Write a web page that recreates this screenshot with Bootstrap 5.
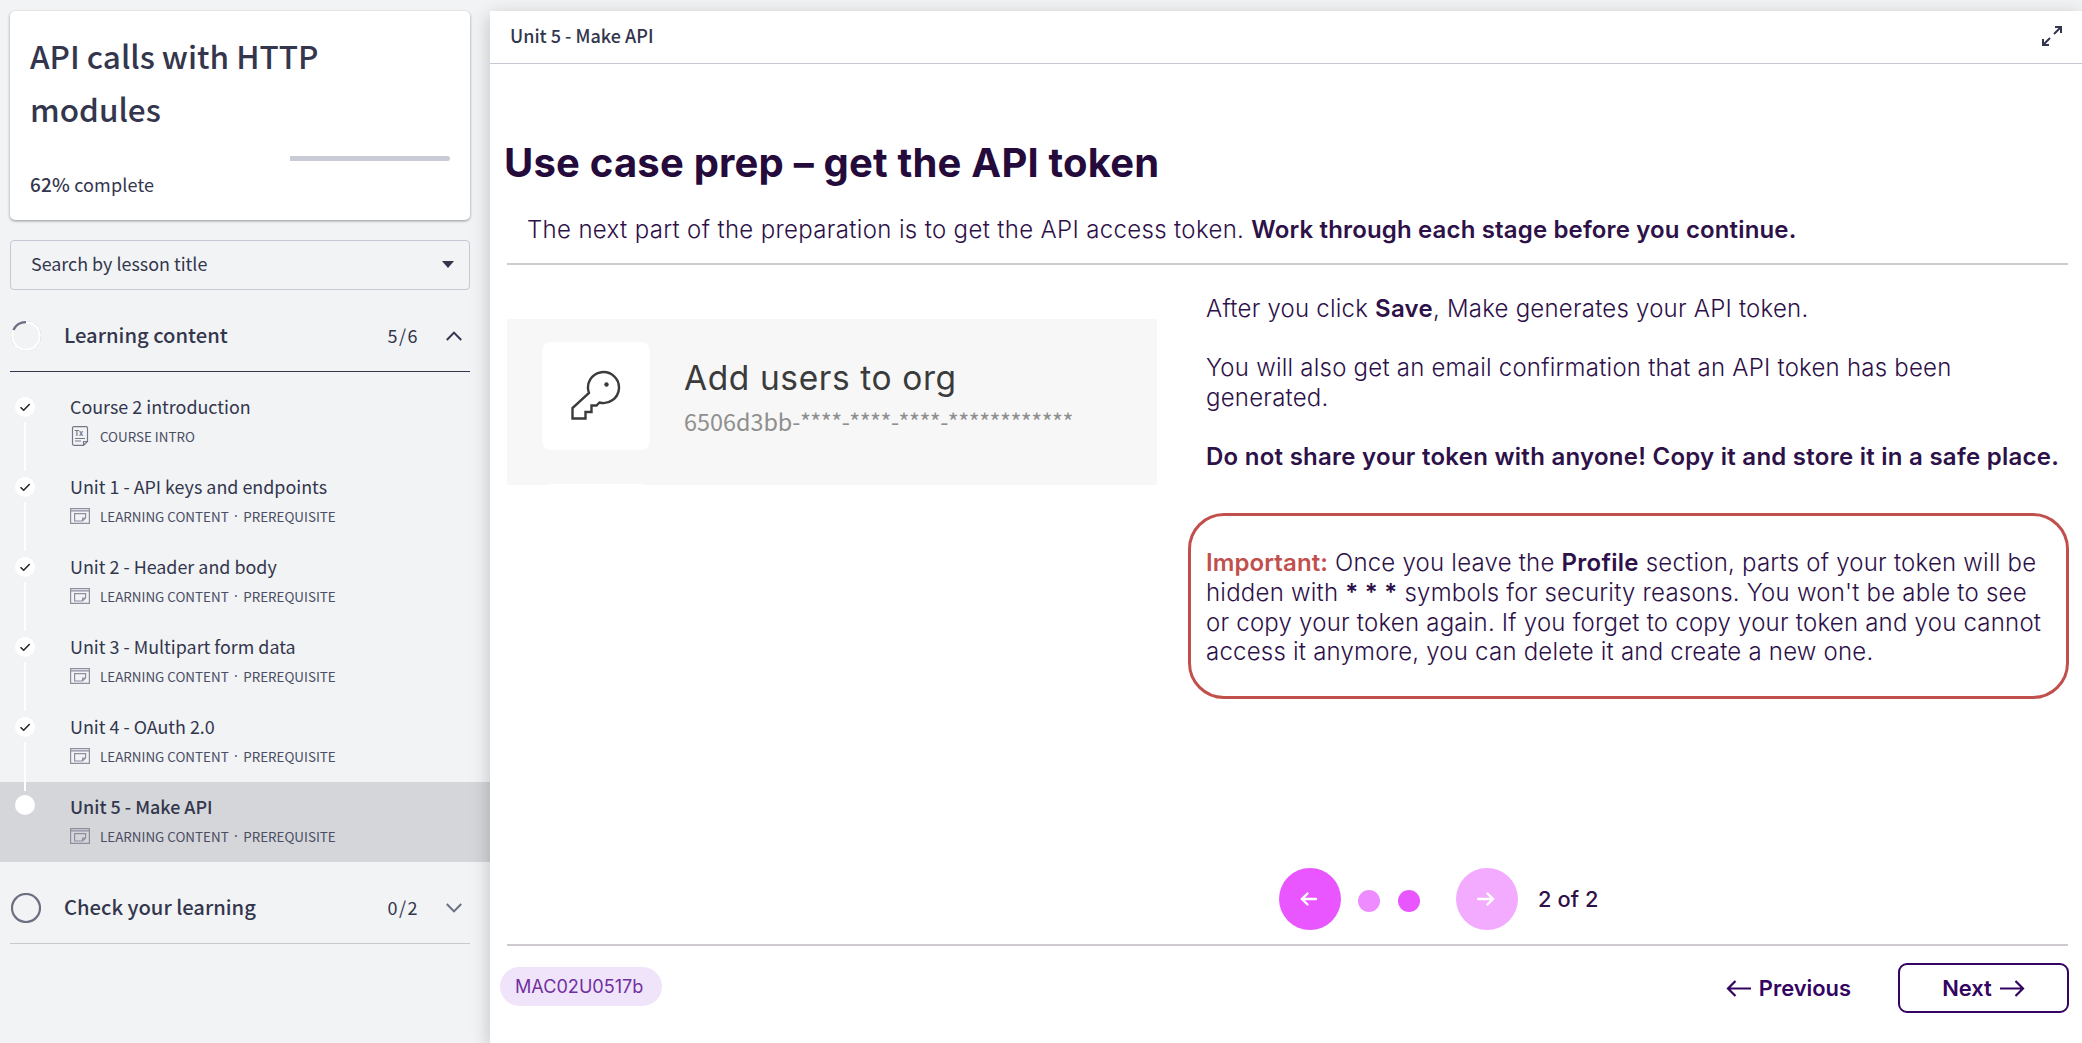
<!DOCTYPE html>
<html lang="en">
<head>
<meta charset="utf-8">
<meta name="viewport" content="width=device-width, initial-scale=1">
<title>API calls with HTTP modules</title>
<link href="https://cdn.jsdelivr.net/npm/bootstrap@5.3.0/dist/css/bootstrap.min.css" rel="stylesheet">
<style>
:root{--ink:#33364d;--plum:#2d1148;--deep:#250a3c}
body{background:#f1f3f5;color:var(--ink);font-family:"Noto Sans CJK SC","Noto Sans",sans-serif;height:1043px;overflow:hidden}
.side{width:490px;height:1043px;padding-top:11px}
.course{margin:0 20px 0 10px;height:209px;border-radius:5px;padding:18px 20px 0;box-shadow:0 1px 3px rgba(0,0,0,.4)}
.course h1{font-size:31.5px;line-height:53px;font-weight:500;margin:0 0 21px;white-space:nowrap}
.track{height:5px;border-radius:3px;background:linear-gradient(90deg,#fff 62%,#c9cbd6 62%)}
.pct{font-size:18px;line-height:27px;margin-top:9px;letter-spacing:.15px}
.pct b{font-weight:500;font-size:19px}
.lookup{margin:20px 20px 0 10px;height:50px;border:1px solid #c6c8d5;border-radius:4px;padding:0 15px 2px 20px;font-size:17.9px;line-height:46px}
.lookup span{padding-bottom:2px}
.sect{margin:0 20px 0 10px;height:82px;padding:11px 8px 0 1px;border-bottom:1px solid var(--ink)}
.sect h2{font-size:20.2px;line-height:30px;font-weight:500;margin:0;padding:0 0 2px 23px}
.sect .num{font-size:18px;letter-spacing:1.5px;line-height:30px;padding:0 27px 2px 0}
.sect.later{border-color:#c8c9cc}
.lessons{padding-top:10px}
.lesson{height:80px;padding:15px 0 0 15px}
.lesson.now{background:#d5d6da;padding-top:13px}
.rail{width:20px}
.rail .dot{width:20px;height:20px;border-radius:50%;background:#fff;display:flex;align-items:center;justify-content:center}
.rail .wire{width:2px;height:49px;background:#fff;margin:5px 0 0 9px}
.info{margin-left:35px}
.ttl{font-size:17.9px;line-height:26px;margin-top:-4px;white-space:nowrap}
.now .ttl{font-weight:500;margin-top:-2px}
.kind{font-size:13.4px;line-height:20px;margin-top:7px;white-space:nowrap;color:#4a4d63}
.kind svg{width:20px;height:20px;margin-right:10px;flex:none}
.kind i{font:normal 14px/20px "Noto Sans",sans-serif;width:14.5px;text-align:center}
.stage{margin-top:11px;background:#fff;box-shadow:0 5px 18px rgba(0,0,0,.22);width:1592px;height:1032px;font-family:Inter,"Liberation Sans",sans-serif;color:var(--plum)}
.top{height:53px;border-bottom:1px solid #c6c8d8;padding:0 18px 2px 20px;font:500 18px/48px "Noto Sans CJK SC","Noto Sans",sans-serif;color:var(--ink)}
.top span{padding-bottom:2px}
.big{font-size:40px;line-height:50px;font-weight:700;color:var(--deep);margin:74px 0 0 14px;letter-spacing:.2px;white-space:nowrap}
.intro{font-size:24px;line-height:30px;font-weight:300;margin:27px 0 18px 37px;white-space:nowrap;letter-spacing:.34px}
.intro b{font-weight:600;letter-spacing:.15px}
.copy b{font-weight:600;letter-spacing:.26px}
.bar{height:2px;background:#cfcacf;margin-left:17px;width:1561px}
.body-row{height:603px}
.panel{margin:54px 0 0 17px;width:650px;height:166px;background:#f7f7f7;color:#3b3b3b;padding:23px 0 0 35px;overflow:hidden}
.tile{width:108px;height:108px;border-radius:9px;background:#fff;padding-bottom:3px}
.peek{width:108px;height:20px;border-radius:9px;background:#fff;margin-top:34px}
.key-txt{padding:16px 0 0 34px}
.key-t{font-size:33.5px;line-height:40px;white-space:nowrap;letter-spacing:.6px}
.key-v{font-family:"Noto Sans CJK SC","Noto Sans",sans-serif;font-size:23.4px;line-height:30px;color:#8f8f8f;white-space:nowrap;margin-top:8px}
.key-v span{letter-spacing:-.5px}
.copy{font-size:24px;line-height:29.6px;font-weight:300;padding:29px 0 0 49px;width:911px;white-space:nowrap;letter-spacing:.22px}
.copy p{margin:0 0 29.5px}
.alertbox{border:3px solid #c1504d;border-radius:36px;margin:42px 0 0 -18px;width:881px;height:186px;padding:32px 0 0 15px}
.alertbox b.imp{color:#c1504d;letter-spacing:.1px}
.pager{height:62px;margin:0 0 14px 789px}
.rnd{width:62px;height:62px;border-radius:50%;background:#e956ff}
.rnd.off{background:#f3abff;margin-left:36px}
.pip{width:22px;height:22px;border-radius:50%;background:#e956ff;margin:4px 0 0 18px}
.pip.off{background:#ee8cff;margin-left:17px}
.cnt{font-size:21.8px;font-weight:500;margin-left:20px;letter-spacing:.1px}
.foot{padding:17px 13px 0 10px}
.code{height:39px;border-radius:20px;background:#f0e4fb;color:#7030a0;font-size:18.1px;line-height:39px;width:162px;padding-left:15px;margin-top:4px}
.lnk{font-size:21.9px;line-height:50px;font-weight:600;color:#330461}
.lnk svg{margin-top:1px}
.nxt{width:171px;height:50px;border:2px solid #330461;border-radius:9px;margin-left:47px;line-height:46px}
</style>
<script src="https://cdn.jsdelivr.net/npm/bootstrap@5.3.0/dist/js/bootstrap.bundle.min.js"></script>
</head>
<body>
<svg width="0" height="0" class="position-absolute">
<symbol id="page" viewBox="0 0 20 20"><g fill="none" stroke="#8d8f9f" stroke-width="1.2"><path d="M.6 2.6h18.800v14.800H.6zM.6 4.900h18.800M4.600 7.600h11v4.400l-3 3h-8zM12.600 15v-3h3"/></g></symbol>
<symbol id="tick" viewBox="0 0 20 20"><path d="M5.500 10.300l3.200 3 6-6.300" fill="none" stroke="#222" stroke-width="1.5"/></symbol>
</svg>
<div class="d-flex">
<aside class="side flex-shrink-0">
  <div class="course bg-white">
    <h1>API calls with HTTP<br>modules</h1>
    <div class="track"></div>
    <div class="pct"><b>62%</b> complete</div>
  </div>
  <div class="lookup d-flex justify-content-between align-items-center"><span>Search by lesson title</span><svg width="12" height="7"><path d="M0 0h12L6 7z" fill="#33364d"/></svg></div>
  <div class="sect d-flex align-items-center">
    <svg width="30" height="30"><circle cx="15" cy="15" r="14.600" fill="none" stroke="#b9bbc6" stroke-width=".7" stroke-dasharray="5 2"/><circle cx="15" cy="15" r="13.700" fill="none" stroke="#fff" stroke-width="2"/><path d="M2.400 9A14 14 0 0 1 15 1.200" fill="none" stroke="#6c6f82" stroke-width="2.200"/></svg>
    <h2>Learning content</h2><span class="num ms-auto">5/6</span><svg width="16" height="10"><path d="M.8 9L8 1.600 15.200 9" fill="none" stroke="#33364d" stroke-width="2"/></svg>
  </div>
  <div class="lessons">
    <div class="lesson d-flex"><div class="rail"><div class="dot"><svg width="20" height="20"><use href="#tick"/></svg></div><div class="wire"></div></div><div class="info"><div class="ttl">Course 2 introduction</div><div class="kind d-flex align-items-center"><svg viewBox="0 0 20 20"><path d="M4 .7h12q1.500 0 1.500 1.500V15.500l-4 3.800H4q-1.500 0-1.500-1.500V2.200Q2.500.7 4 .7zM13.500 19v-3.500h4M5 12.500h10M5 15h6" fill="none" stroke="#74768a" stroke-width="1.200"/><text x="4.500" y="9.500" font-size="7.500" font-weight="700" fill="#74768a">Tx</text></svg>COURSE INTRO</div></div></div>
    <div class="lesson d-flex"><div class="rail"><div class="dot"><svg width="20" height="20"><use href="#tick"/></svg></div><div class="wire"></div></div><div class="info"><div class="ttl">Unit 1 - API keys and endpoints</div><div class="kind d-flex align-items-center"><svg><use href="#page"/></svg>LEARNING CONTENT<i>·</i>PREREQUISITE</div></div></div>
    <div class="lesson d-flex"><div class="rail"><div class="dot"><svg width="20" height="20"><use href="#tick"/></svg></div><div class="wire"></div></div><div class="info"><div class="ttl">Unit 2 - Header and body</div><div class="kind d-flex align-items-center"><svg><use href="#page"/></svg>LEARNING CONTENT<i>·</i>PREREQUISITE</div></div></div>
    <div class="lesson d-flex"><div class="rail"><div class="dot"><svg width="20" height="20"><use href="#tick"/></svg></div><div class="wire"></div></div><div class="info"><div class="ttl">Unit 3 - Multipart form data</div><div class="kind d-flex align-items-center"><svg><use href="#page"/></svg>LEARNING CONTENT<i>·</i>PREREQUISITE</div></div></div>
    <div class="lesson d-flex"><div class="rail"><div class="dot"><svg width="20" height="20"><use href="#tick"/></svg></div><div class="wire"></div></div><div class="info"><div class="ttl">Unit 4 - OAuth 2.0</div><div class="kind d-flex align-items-center"><svg><use href="#page"/></svg>LEARNING CONTENT<i>·</i>PREREQUISITE</div></div></div>
    <div class="lesson now d-flex"><div class="rail"><div class="dot"></div></div><div class="info"><div class="ttl">Unit 5 - Make API</div><div class="kind d-flex align-items-center"><svg><use href="#page"/></svg>LEARNING CONTENT<i>·</i>PREREQUISITE</div></div></div>
  </div>
  <div class="sect later d-flex align-items-center">
    <svg width="30" height="30"><circle cx="15" cy="15" r="14" fill="none" stroke="#6c6f82" stroke-width="2.2"/></svg>
    <h2>Check your learning</h2><span class="num ms-auto">0/2</span><svg width="16" height="10"><path d="M.8 1L8 8.400 15.200 1" fill="none" stroke="#6c6f82" stroke-width="2"/></svg>
  </div>
</aside>
<main class="stage flex-shrink-0">
  <div class="top d-flex justify-content-between align-items-center"><span>Unit 5 - Make API</span><svg width="24" height="24"><path d="M14 10l7-7M15 3h6v6M10 14l-7 7M3 15v6h6" fill="none" stroke="#33364d" stroke-width="2"/></svg></div>
  <h1 class="big">Use case prep – get the API token</h1>
  <div class="intro">The next part of the preparation is to get the API access token. <b>Work through each stage before you continue.</b></div>
  <div class="bar"></div>
  <div class="d-flex body-row">
    <div class="panel flex-shrink-0"><div class="d-flex"><div class="tile d-flex align-items-center justify-content-center"><svg width="50" height="50" viewBox="0 0 50 50"><path d="M1.500 48.500V38L18 23A15.500 15.500 0 1 1 28.500 32.500L25.500 35.500H20.500V42H14.500V48.500z" fill="none" stroke="#3b3b3b" stroke-width="2.400"/><circle cx="35.500" cy="14.500" r="2.200" fill="#3b3b3b"/></svg></div><div class="key-txt"><div class="key-t">Add users to org</div><div class="key-v">6506d3bb<span>-****-****-****-************</span></div></div></div><div class="peek"></div></div>
    <div class="copy">
      <p>After you click <b>Save</b>, Make generates your API token.</p>
      <p>You will also get an email confirmation that an API token has been<br>generated.</p>
      <p><b>Do not share your token with anyone! Copy it and store it in a safe place.</b></p>
      <div class="alertbox"><b class="imp">Important:</b> Once you leave the <b>Profile</b> section, parts of your token will be<br>hidden with <b>* * *</b> symbols for security reasons. You won't be able to see<br>or copy your token again. If you forget to copy your token and you cannot<br>access it anymore, you can delete it and create a new one.</div>
    </div>
  </div>
  <div class="pager d-flex align-items-center">
    <div class="rnd d-flex align-items-center justify-content-center"><svg width="20" height="16"><path d="M16 8H3M7.500 2.500L2 8l5.500 5.500" fill="none" stroke="#fff" stroke-width="2.400" stroke-linecap="round"/></svg></div>
    <div class="pip off"></div><div class="pip"></div>
    <div class="rnd off d-flex align-items-center justify-content-center"><svg width="20" height="16"><path d="M1 8h15M10.500 2.500L16 8l-5.500 5.500" fill="none" stroke="#fff" stroke-width="2.400" stroke-linecap="round"/></svg></div>
    <div class="cnt">2 of 2</div>
  </div>
  <div class="bar"></div>
  <div class="foot d-flex">
    <div class="code">MAC02U0517b</div>
    <div class="lnk ms-auto d-flex align-items-center gap-2"><svg width="25" height="17"><path d="M25 8.500H2M9.500 1L2 8.500l7.500 7.500" fill="none" stroke="#330461" stroke-width="2.200"/></svg>Previous</div>
    <div class="lnk nxt d-flex align-items-center justify-content-center gap-2">Next<svg width="25" height="17"><path d="M0 8.500h23M15.500 1L23 8.500 15.500 16" fill="none" stroke="#330461" stroke-width="2.200"/></svg></div>
  </div>
</main>
</div>
</body>
</html>
